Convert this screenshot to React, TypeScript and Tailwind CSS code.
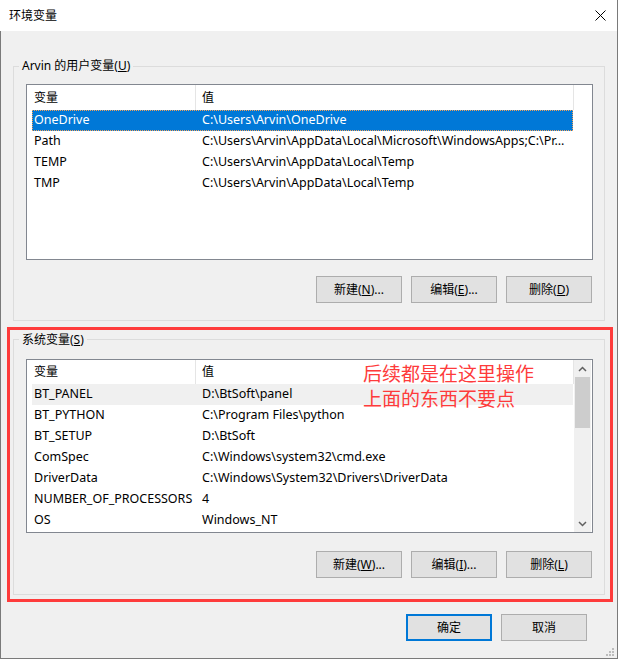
import React from 'react'

type Row = { name: string; value: string }

const userVars: Row[] = [
  { name: 'OneDrive', value: 'C:\\Users\\Arvin\\OneDrive' },
  {
    name: 'Path',
    value: 'C:\\Users\\Arvin\\AppData\\Local\\Microsoft\\WindowsApps;C:\\Pr...',
  },
  { name: 'TEMP', value: 'C:\\Users\\Arvin\\AppData\\Local\\Temp' },
  { name: 'TMP', value: 'C:\\Users\\Arvin\\AppData\\Local\\Temp' },
]

const systemVars: Row[] = [
  { name: 'BT_PANEL', value: 'D:\\BtSoft\\panel' },
  { name: 'BT_PYTHON', value: 'C:\\Program Files\\python' },
  { name: 'BT_SETUP', value: 'D:\\BtSoft' },
  { name: 'ComSpec', value: 'C:\\Windows\\system32\\cmd.exe' },
  { name: 'DriverData', value: 'C:\\Windows\\System32\\Drivers\\DriverData' },
  { name: 'NUMBER_OF_PROCESSORS', value: '4' },
  { name: 'OS', value: 'Windows_NT' },
]

const Button = ({
  label,
  hotkey,
  tail = '',
  primary = false,
}: {
  label: string
  hotkey?: string
  tail?: string
  primary?: boolean
}) => (
  <button
    className={
      primary
        ? 'w-[86px] h-[27px] bg-[#e1e1e1] border-2 border-[#0078d7] text-[12px] text-black flex items-center justify-center'
        : 'w-[86px] h-[27px] bg-[#e1e1e1] border border-[#adadad] text-[12px] text-black flex items-center justify-center'
    }
  >
    {label}
    {hotkey && (
      <>
        (<span className="underline">{hotkey}</span>){tail}
      </>
    )}
  </button>
)

const Header = ({ full }: { full: boolean }) => (
  <div className="h-full flex bg-white">
    <div className="w-[169px] pl-[7px] flex items-center border-r border-[#e5e5e5]">
      变量
    </div>
    <div className="w-[378px] pl-[6px] flex items-center border-r border-[#e5e5e5]">
      值
    </div>
    {full && <div className="flex-1" />}
  </div>
)

const ListRow = ({
  row,
  selected,
  hover,
}: {
  row: Row
  selected?: boolean
  hover?: boolean
}) => {
  let cls =
    'h-[21px] ml-[5px] w-[541px] flex items-center whitespace-nowrap text-[12.5px]'
  if (selected)
    cls +=
      ' bg-[#0078d7] text-white outline outline-1 -outline-offset-1 outline-dotted outline-[#f3a25a]'
  if (hover) cls += ' bg-[#f0f0f0]'
  return (
    <div className={cls}>
      <div className="w-[168px] pl-[2px] overflow-hidden">{row.name}</div>
      <div className="pl-[2px]">{row.value}</div>
    </div>
  )
}

const ScrollBar = () => (
  <div className="w-[17px] h-full bg-[#f0f0f0] flex flex-col">
    <div className="h-[17px] flex items-center justify-center">
      <svg width="9" height="6" viewBox="0 0 9 6">
        <path d="M1 5 L4.5 1.5 L8 5" fill="none" stroke="#606060" strokeWidth="1.5" />
      </svg>
    </div>
    <div className="h-[51px] mx-[1px] bg-[#cdcdcd]" />
    <div className="flex-1" />
    <div className="h-[17px] flex items-center justify-center">
      <svg width="9" height="6" viewBox="0 0 9 6">
        <path d="M1 1 L4.5 4.5 L8 1" fill="none" stroke="#606060" strokeWidth="1.5" />
      </svg>
    </div>
  </div>
)

// label sits on the group box's top border line
const GroupLabel = ({ children, lift }: { children: React.ReactNode; lift: string }) => (
  <div className={`self-start -ml-[7px] px-[3px] h-[16px] leading-[16px] bg-[#f0f0f0] ${lift}`}>
    {children}
  </div>
)

export default function App() {
  return (
    <div className="w-[618px] h-[659px] flex flex-col bg-[#f0f0f0] border-r border-[#7a7a7a] text-[12px] text-black font-['Noto_Sans','Noto_Sans_CJK_SC',sans-serif] relative overflow-hidden">
      {/* title bar */}
      <div className="h-[31px] shrink-0 bg-white flex items-center justify-between pl-[9px] pr-[11px]">
        <span className="text-[12px]">环境变量</span>
        <svg width="11" height="11" viewBox="0 0 11 11">
          <path d="M0.5 0.5 L10.5 10.5 M10.5 0.5 L0.5 10.5" stroke="#000" strokeWidth="1" />
        </svg>
      </div>

      <div className="flex-1 border-l border-b border-[#7a7a7a] px-[12px] pt-[35px]">
        {/* user variables */}
        <div className="border border-[#dcdcdc] pl-[12px] pr-[11px] pb-[17px] flex flex-col">
          <GroupLabel lift="-mt-[9px]">
            Arvin 的用户变量(<span className="underline">U</span>)
          </GroupLabel>
          <div className="mt-[10px] h-[176px] border border-[#828790] bg-white flex flex-col">
            <div className="h-[25px] shrink-0">
              <Header full />
            </div>
            {userVars.map((row, i) => (
              <ListRow key={row.name} row={row} selected={i === 0} />
            ))}
          </div>
          <div className="mt-[16px] flex justify-end gap-[9px] pr-[1px]">
            <Button label="新建" hotkey="N" tail="..." />
            <Button label="编辑" hotkey="E" tail="..." />
            <Button label="删除" hotkey="D" />
          </div>
        </div>

        {/* system variables */}
        <div className="mt-[18px] border border-[#dcdcdc] pl-[12px] pr-[11px] pb-[16px] flex flex-col">
          <GroupLabel lift="-mt-[8px]">
            系统变量(<span className="underline">S</span>)
          </GroupLabel>
          <div className="mt-[11px] h-[174px] border border-[#828790] bg-white flex">
            <div className="w-[547px] flex flex-col">
              <div className="h-[24px] shrink-0">
                <Header full={false} />
              </div>
              {systemVars.map((row, i) => (
                <ListRow key={row.name} row={row} hover={i === 0} />
              ))}
            </div>
            <ScrollBar />
          </div>
          <div className="mt-[18px] flex justify-end gap-[9px] pr-[1px]">
            <Button label="新建" hotkey="W" tail="..." />
            <Button label="编辑" hotkey="I" tail="..." />
            <Button label="删除" hotkey="L" />
          </div>
        </div>

        <div className="mt-[19px] flex justify-end gap-[9px] pr-[18px]">
          <Button label="确定" primary />
          <Button label="取消" />
        </div>
      </div>

      {/* annotation overlay */}
      <div className="absolute left-[7px] top-[327px] w-[606px] h-[275px] border-[3px] border-[#fe3b3b] pointer-events-none" />
      <div className="absolute left-[363px] top-[360px] text-[19px] leading-[25px] text-[#fe3b3b] font-['Noto_Sans_CJK_SC',sans-serif]">
        后续都是在这里操作
        <br />
        上面的东西不要点
      </div>

      {/* resize grip */}
      <div className="absolute right-[3px] bottom-[3px] grid grid-cols-3 gap-[1px]">
        <span className="w-[2px] h-[2px]" />
        <span className="w-[2px] h-[2px]" />
        <span className="w-[2px] h-[2px] bg-[#bcbcbc]" />
        <span className="w-[2px] h-[2px]" />
        <span className="w-[2px] h-[2px] bg-[#bcbcbc]" />
        <span className="w-[2px] h-[2px] bg-[#bcbcbc]" />
        <span className="w-[2px] h-[2px] bg-[#bcbcbc]" />
        <span className="w-[2px] h-[2px] bg-[#bcbcbc]" />
        <span className="w-[2px] h-[2px] bg-[#bcbcbc]" />
      </div>
    </div>
  )
}
